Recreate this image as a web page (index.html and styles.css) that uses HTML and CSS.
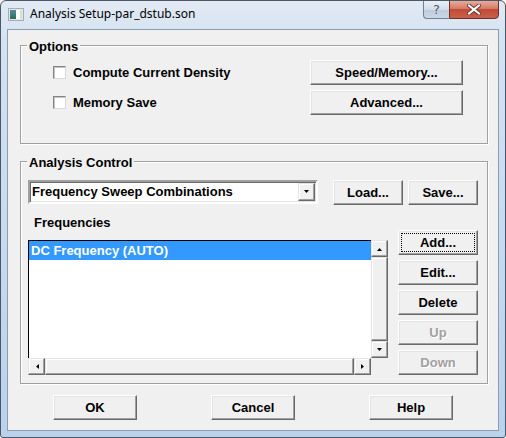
FILE: index.html
```html
<!DOCTYPE html>
<html lang="en">
<head>
<meta charset="UTF-8" />
<title>Analysis Setup-par_dstub.son</title>
<link rel="stylesheet" href="styles.css">
</head>
<body>
<div class="window">
  <div class="titlebar">
    <svg class="app-icon" width="16" height="16" viewBox="0 0 16 16">
      <defs>
        <linearGradient id="teal" x1="0" y1="0" x2="0" y2="1">
          <stop offset="0" stop-color="#4f8f9c"/>
          <stop offset="1" stop-color="#2f6a58"/>
        </linearGradient>
      </defs>
      <rect x="0.5" y="2.5" width="15" height="12" fill="#e4e8ec" stroke="#a3acb6"/>
      <rect x="2" y="4" width="6" height="9" fill="url(#teal)"/>
      <rect x="8" y="4" width="5" height="9" fill="#ffffff"/>
      <rect x="12" y="4" width="2" height="9" fill="#cfe3cf"/>
    </svg>
    <span class="title">Analysis Setup-par_dstub.son</span>
    <div class="caption-btns">
      <div class="cap-help">?</div>
      <div class="cap-close">
        <svg width="14" height="11" viewBox="0 0 14 11">
          <path d="M2 1.5 L12 9.5 M12 1.5 L2 9.5" stroke="#6b3a33" stroke-width="4" stroke-linecap="square"/>
          <path d="M2 1.5 L12 9.5 M12 1.5 L2 9.5" stroke="#ffffff" stroke-width="2" stroke-linecap="square"/>
        </svg>
      </div>
    </div>
  </div>

  <div class="client">
    <div class="group options">
      <span class="group-caption">Options</span>
      <div class="options-grid">
        <label class="check"><span class="box"></span>Compute Current Density</label>
        <button class="btn">Speed/Memory...</button>
        <label class="check"><span class="box"></span>Memory Save</label>
        <button class="btn">Advanced...</button>
      </div>
    </div>

    <div class="group analysis">
      <span class="group-caption">Analysis Control</span>
      <div class="combo-row">
        <div class="combo">
          <span class="combo-text">Frequency Sweep Combinations</span>
          <span class="combo-arrow">
            <svg width="7" height="4" viewBox="0 0 7 4"><path d="M1 0 H6 L3.5 3 Z" fill="#000"/></svg>
          </span>
        </div>
        <button class="btn small">Load...</button>
        <button class="btn small">Save...</button>
      </div>

      <div class="freq-grid">
        <div class="freq-left">
          <div class="freq-label">Frequencies</div>
          <div class="listbox">
            <div class="list-items">
              <div class="list-item selected">DC Frequency (AUTO)</div>
            </div>
            <div class="vscroll">
              <span class="sb-btn"><svg width="7" height="4" viewBox="0 0 7 4"><path d="M1 4 H6 L3.5 1 Z" fill="#000"/></svg></span>
              <span class="sb-thumb"></span>
              <span class="sb-btn"><svg width="7" height="4" viewBox="0 0 7 4"><path d="M1 0 H6 L3.5 3 Z" fill="#000"/></svg></span>
            </div>
            <div class="hscroll">
              <span class="sb-btn"><svg width="4" height="7" viewBox="0 0 4 7"><path d="M4 1 V6 L1 3.5 Z" fill="#000"/></svg></span>
              <span class="sb-thumb"></span>
              <span class="sb-btn"><svg width="4" height="7" viewBox="0 0 4 7"><path d="M0 1 V6 L3 3.5 Z" fill="#000"/></svg></span>
            </div>
            <div class="sb-corner"></div>
          </div>
        </div>
        <div class="freq-buttons">
          <button class="btn focused">Add...</button>
          <button class="btn">Edit...</button>
          <button class="btn">Delete</button>
          <button class="btn" disabled>Up</button>
          <button class="btn" disabled>Down</button>
        </div>
      </div>
    </div>

    <div class="dialog-buttons">
      <button class="btn">OK</button>
      <button class="btn">Cancel</button>
      <button class="btn">Help</button>
    </div>
  </div>
</div>
</body>
</html>
```

FILE: styles.css
```css
* {
  box-sizing: border-box;
}
body {
  margin: 0;
  background: #fff;
}
.window {
  width: 506px;
  height: 438px;
  border: 1px solid #4a5766;
  border-radius: 6px 6px 3px 3px;
  background: linear-gradient(#e2eaf4, #d4e2f1 40px, #bad2ec);
  padding: 0 6px 6px;
  display: flex;
  flex-direction: column;
  overflow: hidden;
}
.titlebar {
  height: 28px;
  display: flex;
  align-items: flex-start;
  flex-shrink: 0;
}
.app-icon {
  margin: 5px 0 0 1px;
}
.title {
  margin: 5px 0 0 6px;
  font-family: "Noto Sans", "Open Sans", sans-serif;
  font-size: 12px;
  line-height: 16px;
  color: #000;
}
.caption-btns {
  margin: -1px 0 0 auto;
  display: flex;
}
.cap-help {
  width: 26px;
  height: 19px;
  border: 1px solid #6f8197;
  border-right: none;
  border-radius: 0 0 0 4px;
  background: linear-gradient(#e9eff7, #d2dde9 50%, #bccbdc 51%, #cad7e6);
  color: #45505c;
  font-family: "DejaVu Sans", sans-serif;
  font-size: 13px;
  line-height: 17px;
  text-align: center;
  text-shadow: 0 0 1px #fff;
}
.cap-close {
  width: 50px;
  height: 19px;
  border: 1px solid #6e3128;
  border-radius: 0 0 4px 0;
  background: linear-gradient(#e7ab9c, #d67a67 45%, #c24a35 50%, #c9614c);
  display: flex;
  align-items: center;
  justify-content: center;
}
.client {
  flex: 1;
  border: 1px solid #8c9db3;
  background: #f0f0f0;
  padding: 15px 10px 0 12px;
  font-family: "Liberation Sans", Arial, sans-serif;
  font-weight: bold;
  font-size: 13px;
  color: #000;
}
.group {
  position: relative;
  border: 1px solid #a0a0a0;
  box-shadow: inset 1px 1px #fff, 1px 1px #fff;
}
.group-caption {
  position: absolute;
  top: -7px;
  left: 6px;
  padding: 0 2px;
  line-height: 15px;
  background: #f0f0f0;
}
.options {
  padding: 14px 24px 28px 32px;
  margin-bottom: 17px;
}
.options-grid {
  display: grid;
  grid-template-columns: 1fr 153px;
  grid-template-rows: 25px 25px;
  row-gap: 5px;
}
.check {
  display: flex;
  align-items: center;
}
.check .box {
  width: 13px;
  height: 13px;
  margin-right: 7px;
  background: #fff;
  border: 1px solid;
  border-color: #848484 #d8d8d8 #d8d8d8 #848484;
  box-shadow: inset 1px 1px #c4c4c4;
}
.btn {
  height: 25px;
  padding: 0;
  background: #f0f0f0;
  border: 1px solid;
  border-color: #fff #696969 #696969 #fff;
  box-shadow: inset -1px -1px #a0a0a0, inset 1px 1px #e3e3e3;
  font: inherit;
  color: #000;
}
.btn:disabled {
  color: #a0a0a0;
  text-shadow: 1px 1px #fff;
}
.btn.focused {
  outline: 1px dotted #000;
  outline-offset: -4px;
}
.analysis {
  padding: 18px 9px 8px 7px;
}
.combo-row {
  display: flex;
  align-items: flex-start;
  gap: 5px;
  height: 25px;
}
.combo {
  width: 290px;
  height: 24px;
  margin-right: 10px;
  display: flex;
  background: #fff;
  border: 2px solid;
  border-color: #a0a0a0 #fff #fff #a0a0a0;
  box-shadow: inset 1px 1px #696969, inset -1px -1px #e3e3e3;
  padding: 1px;
}
.combo-text {
  flex: 1;
  padding-left: 1px;
  line-height: 18px;
}
.combo-arrow {
  width: 17px;
  display: flex;
  align-items: center;
  justify-content: center;
  background: #f0f0f0;
  border: 1px solid;
  border-color: #e3e3e3 #696969 #696969 #e3e3e3;
  box-shadow: inset -1px -1px #a0a0a0, inset 1px 1px #fff;
}
.btn.small {
  width: 70px;
}
.freq-grid {
  display: grid;
  grid-template-columns: 360px 80px;
  column-gap: 10px;
}
.freq-label {
  padding: 10px 0 10px 6px;
  line-height: 15px;
}
.listbox {
  height: 135px;
  display: grid;
  grid-template-columns: 1fr 17px;
  grid-template-rows: 1fr 17px;
}
.list-items {
  background: #fff;
  border-top: 1px solid #000;
  border-left: 1px solid #000;
}
.list-item {
  height: 19px;
  line-height: 19px;
  padding-left: 2px;
}
.list-item.selected {
  background: #3399ff;
  color: #fff;
}
.vscroll,
.hscroll {
  display: flex;
  background: #f0f0f0;
}
.vscroll {
  flex-direction: column;
}
.sb-btn,
.sb-thumb {
  display: flex;
  align-items: center;
  justify-content: center;
  background: #f0f0f0;
  border: 1px solid;
  border-color: #e3e3e3 #696969 #696969 #e3e3e3;
  box-shadow: inset -1px -1px #a0a0a0, inset 1px 1px #fff;
}
.vscroll .sb-btn {
  height: 17px;
}
.hscroll .sb-btn {
  width: 17px;
}
.sb-thumb {
  flex: 1;
}
.freq-buttons {
  padding-top: 25px;
  display: flex;
  flex-direction: column;
  gap: 5px;
}
.dialog-buttons {
  margin-top: 11px;
  padding-left: 33px;
  display: flex;
  gap: 74px;
}
.dialog-buttons .btn {
  width: 84px;
}
```
